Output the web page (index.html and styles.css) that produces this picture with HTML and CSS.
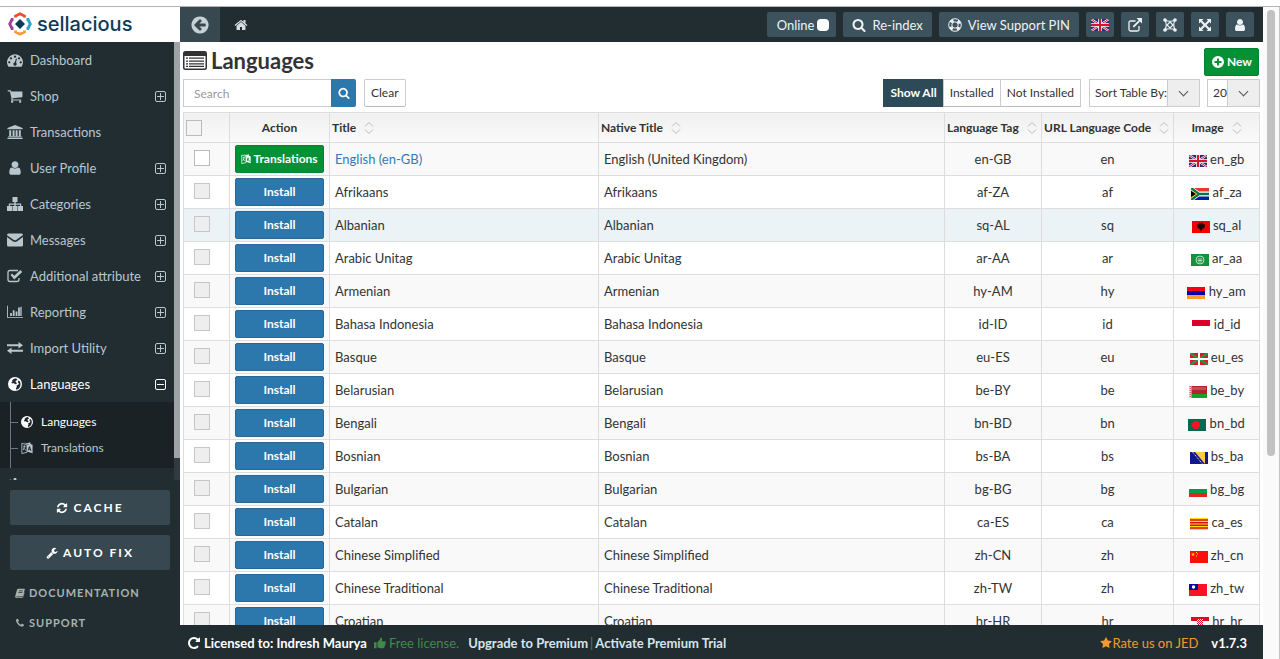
FILE: index.html
```html
<!DOCTYPE html>
<html lang="en">
<head>
<meta charset="utf-8">
<title>Languages - Sellacious</title>
<link rel="stylesheet" href="styles.css">
</head>
<body>
<svg class="defs" aria-hidden="true">
  <symbol id="i-back" viewBox="0 0 1792 1792"><path d="M1408 960v-128q0-26-19-45t-45-19h-502l189-189q19-19 19-45t-19-45l-91-91q-18-18-45-18t-45 18l-362 362-91 91q-18 18-18 45t18 45l91 91 362 362q18 18 45 18t45-18l91-91q18-18 18-45t-18-45l-189-189h502q26 0 45-19t19-45zm256-64q0 209-103 385.5t-279.5 279.5-385.5 103-385.5-103-279.5-279.5-103-385.5 103-385.5 279.5-279.5 385.5-103 385.5 103 279.5 279.5 103 385.5z"/></symbol>
  <symbol id="i-home" viewBox="0 0 1792 1792"><path d="M1472 992v480q0 26-19 45t-45 19h-384v-384h-256v384h-384q-26 0-45-19t-19-45v-480q0-1 .5-3t.5-3l575-474 575 474q1 2 1 6zm223-69l-62 74q-8 9-21 11h-3q-13 0-21-7l-692-577-692 577q-12 8-24 7-13-2-21-11l-62-74q-8-10-7-23.500t11-21.500l719-599q32-26 76-26t76 26l244 204v-195q0-14 9-23t23-9h192q14 0 23 9t9 23v408l219 182q10 8 11 21.500t-7 23.500z"/></symbol>
  <symbol id="i-search" viewBox="0 0 1792 1792"><path d="M1216 832q0-185-131.500-316.500t-316.500-131.500-316.500 131.500-131.500 316.500 131.500 316.500 316.500 131.500 316.500-131.500 131.500-316.500zm512 832q0 52-38 90t-90 38q-54 0-90-38l-343-342q-179 124-399 124-143 0-273.500-55.500t-225-150-150-225-55.500-273.500 55.500-273.500 150-225 225-150 273.500-55.500 273.500 55.500 225 150 150 225 55.500 273.500q0 220-124 399l343 343q37 37 37 90z"/></symbol>
  <symbol id="i-user" viewBox="0 0 1792 1792"><path d="M1536 1399q0 109-62.500 187t-150.500 78h-854q-88 0-150.500-78t-62.500-187q0-85 8.500-160.500t31.500-152 58.500-131 94-89 134.500-34.500q131 128 313 128t313-128q76 0 134.500 34.500t94 89 58.500 131 31.500 152 8.500 160.500zm-256-887q0 159-112.500 271.500t-271.500 112.500-271.500-112.500-112.500-271.500 112.500-271.500 271.500-112.500 271.500 112.500 112.500 271.500z"/></symbol>
  <symbol id="i-dash" viewBox="0 0 1792 1792"><path d="M384 1152q0-53-37.500-90.500t-90.500-37.500-90.500 37.500-37.500 90.500 37.500 90.500 90.500 37.500 90.500-37.500 37.500-90.500zm192-448q0-53-37.500-90.500t-90.500-37.500-90.500 37.500-37.500 90.500 37.500 90.500 90.500 37.500 90.500-37.500 37.500-90.500zm428 481l101-382q6-26-7.500-48.500t-38.500-29.500-48 6.500-30 39.500l-101 382q-60 5-107 43.500t-63 98.500q-20 77 20 146t117 89 146-20 89-117q16-60-6-117t-72-91zm660-33q0-53-37.500-90.500t-90.500-37.500-90.500 37.500-37.500 90.500 37.500 90.500 90.500 37.500 90.500-37.500 37.500-90.500zm-640-640q0-53-37.500-90.500t-90.500-37.500-90.500 37.500-37.500 90.500 37.500 90.500 90.500 37.500 90.500-37.500 37.500-90.500zm448 192q0-53-37.500-90.500t-90.500-37.500-90.500 37.500-37.500 90.500 37.500 90.500 90.500 37.500 90.500-37.500 37.500-90.500zm320 448q0 261-141 483-19 29-54 29h-1402q-35 0-54-29-141-221-141-483 0-182 71-348t191-286 286-191 348-71 348 71 286 191 191 286 71 348z"/></symbol>
  <symbol id="i-cart" viewBox="0 0 1792 1792"><path d="M704 1536q0 52-38 90t-90 38-90-38-38-90 38-90 90-38 90 38 38 90zm896 0q0 52-38 90t-90 38-90-38-38-90 38-90 90-38 90 38 38 90zm128-1088v512q0 24-16.500 42.500t-40.500 21.500l-1044 122q13 60 13 70 0 16-24 64h920q26 0 45 19t19 45-19 45-45 19h-1024q-26 0-45-19t-19-45q0-11 8-31.500t16-36 21.500-40 15.500-29.500l-177-823h-204q-26 0-45-19t-19-45 19-45 45-19h256q16 0 28.500 6.500t19.500 15.500 13 24.500 8 26 5.500 29.500 4.500 26h1201q26 0 45 19t19 45z"/></symbol>
  <symbol id="i-bank" viewBox="0 0 18 16"><path d="M9 0l8.500 3.500V5H.5V3.500zM2.500 6h2.200v6.500H2.500zM6.300 6h2.200v6.500H6.300zM9.700 6h2.200v6.500H9.700zM13.300 6h2.200v6.500h-2.200zM1.500 12.800h15V14h-15zM.5 14.500h17V16H.5z"/></symbol>
  <symbol id="i-map" viewBox="0 0 16 14"><path d="M5.500 0h5v5H8.700v1.500H14.200V9H16v5h-5V9h2V7.700H8.700V9h1.800v5h-5V9h1.800V7.700H3V9h2v5H0V9h1.800V6.500h5.500V5H5.500z"/></symbol>
  <symbol id="i-mail" viewBox="0 0 16 13"><path d="M0 1.500Q0 0 1.500 0h13Q16 0 16 1.500L9.500 6.300Q8 7.400 6.500 6.300L0 1.800zM0 3.500l5.800 4.200q2.200 1.500 4.400 0L16 3.500v8q0 1.500-1.500 1.500h-13Q0 13 0 11.500z"/></symbol>
  <symbol id="i-check" viewBox="0 0 16 14"><path d="M11 1.500H3Q1 1.500 1 3.500v7q0 2 2 2h7q2 0 2-2V9" fill="none" stroke="currentColor" stroke-width="1.300"/><path d="M3.500 6l1.500-1.500 2.300 2.200L13.300 1l1.900 1.900-7.900 7.700z"/></symbol>
  <symbol id="i-chart" viewBox="0 0 18 14"><path d="M0 0h1v12.500h17v1H0zM3.500 8h2v3.500h-2zM6.500 5h2v6.500h-2zM9.700 6.500h2v5h-2zM12.500 2h2v9.500h-2zM15 1h1.500v10.500H15z"/></symbol>
  <symbol id="i-exchange" viewBox="0 0 16 12"><path d="M0 2.200h11.500V0L16 3.200l-4.500 3.300V4.300H0zM16 7.700H4.500V5.500L0 8.800 4.500 12V9.800H16z"/></symbol>
  <symbol id="i-globe" viewBox="0 0 14 14"><path fill-rule="evenodd" d="M7 0a7 7 0 1 1 0 14A7 7 0 0 1 7 0zM8 1.200L5.500 2 4 3.500l.5 1L3.200 5.800l1.300.6L6 6l.5 1 1.500.3L9 6 7.500 5l.3-1.200L9.500 3zM10.500 3.500L9.700 5l1.300 1.500L10 8l-1.500.3.3 1.700-1 1.500.7 1.200q2.500-.6 3.500-2.700 1.300-2.800 0-5.500z"/></symbol>
  <symbol id="i-lang" viewBox="0 0 14 14"><path d="M1 1.500l6 1.800V12l-6 1.500z" fill="none" stroke="currentColor"/><path d="M2.500 5l3 .5M4 4v2l-1.500 3.500M3 7l3 3" fill="none" stroke="currentColor"/><path fill-rule="evenodd" d="M3.500.5L7 1.500 11 .3v2l2.500.8V13L7 11V3.500l3-1-3 .2zM9.300 5L8 9.600l1 .3.3-1.100 1.600.4.400 1.200 1 .3-1.800-5.400zm.9 1.300l.5 1.700-1-.3z"/></symbol>
  <symbol id="i-cog" viewBox="0 0 14 14"><path d="M6 0h2l.4 2 1.400.6L11.500 1.500 13 3l-1.200 1.700.5 1.300 2 .3v2l-2 .4L11.700 10l1 1.500-1.500 1.500L9.500 12 8 12.500 7.800 14h-2l-.4-1.800L4 11.700 2.500 13 1 11.500 2.200 10 1.700 8.500 0 8V6l1.800-.4L2.300 4.300 1.200 2.700 2.700 1.200 4.200 2.300 5.700 1.800z"/></symbol>
  <symbol id="i-refresh" viewBox="0 0 1792 1792"><path d="M1639 1056q0 5-1 7-64 268-268 434.500t-478 166.500q-146 0-282.500-55t-243.500-157l-129 129q-19 19-45 19t-45-19-19-45v-448q0-26 19-45t45-19h448q26 0 45 19t19 45-19 45l-137 137q71 66 161 102t187 36q134 0 250-65t186-179q11-17 53-117 8-23 30-23h192q13 0 22.500 9.500t9.500 22.500zm25-800v448q0 26-19 45t-45 19h-448q-26 0-45-19t-19-45 19-45l138-138q-148-137-349-137-134 0-250 65t-186 179q-11 17-53 117-8 23-30 23h-199q-13 0-22.500-9.500t-9.500-22.500v-7q65-268 270-434.500t480-166.500q146 0 284 55.500t245 156.500l130-129q19-19 45-19t45 19 19 45z"/></symbol>
  <symbol id="i-repeat" viewBox="0 0 1792 1792"><path d="M1664 256v448q0 26-19 45t-45 19h-448q-42 0-59-40-17-39 14-69l138-138q-148-137-349-137-104 0-198.500 40.500t-163.500 109.500-109.500 163.500-40.500 198.500 40.500 198.500 109.500 163.500 163.500 109.500 198.500 40.500q119 0 225-52t179-147q7-10 23-12 15 0 25 9l137 138q9 8 9.500 20.500t-7.500 22.500q-109 132-264 204.500t-327 72.500q-156 0-298-61t-245-164-164-245-61-298 61-298 164-245 245-164 298-61q147 0 284.500 55.500t244.500 156.500l130-129q29-31 70-14 39 17 39 59z"/></symbol>
  <symbol id="i-wrench" viewBox="0 0 1792 1792"><path d="M448 1472q0-26-19-45t-45-19-45 19-19 45 19 45 45 19 45-19 19-45zm644-420l-682 682q-37 37-90 37-52 0-91-37l-106-108q-38-36-38-90 0-53 38-91l681-681q39 98 114.500 173.500t173.500 114.500zm634-435q0 39-23 106-47 134-164.500 217.500t-258.500 83.500q-185 0-316.500-131.500t-131.500-316.500 131.500-316.500 316.500-131.500q58 0 121.500 16.500t107.500 46.500q16 11 16 28t-16 28l-293 169v224l193 107q5-3 79-48.500t135.500-81 70.500-35.500q15 0 23.500 10t8.500 25z"/></symbol>
  <symbol id="i-phone" viewBox="0 0 1792 1792"><path d="M1600 1240q0 27-10 70.500t-21 68.500q-21 50-122 106-94 51-186 51-27 0-52.500-3.500t-57.500-12.500-47.500-14.500-55.500-20.500-49-18q-98-35-175-83-128-79-264.500-215.500t-215.500-264.500q-48-77-83-175-3-9-18-49t-20.500-55.500-14.500-47.500-12.500-57.500-3.500-52.500q0-92 51-186 56-101 106-122 25-11 68.500-21t70.500-10q14 0 21 3 18 6 53 76 11 19 30 54t35 63.500 31 53.500q3 4 17.500 25t21.500 35.500 7 28.500q0 20-28.500 50t-62 55-62 53-28.500 46q0 9 5 22.500t8.500 20.500 14 24 11.500 19q76 137 174 235t235 174q2 1 19 11.500t24 14 20.500 8.500 22.500 5q18 0 46-28.500t53-62 55-62 50-28.500q14 0 28.500 7t35.500 21.500 25 17.500q25 15 53.500 31t63.500 35 54 30q70 35 76 53 3 7 3 21z"/></symbol>
  <symbol id="i-book" viewBox="0 0 14 14"><path fill-rule="evenodd" d="M4.500 1H13q1 0 .7 1L11.300 11q-.3 1-1.300 1H2.200q-.7 0-.5.5.2.500 1 .500h8.300L12.800 6l.6.600L11.500 13q-.3 1-1.300 1H2Q0 14 .2 12L2.800 2.500Q3.200 1 4.500 1zM5.500 3.500l-.3 1h5.500l.3-1zM5 5.500l-.3 1h5.500l.3-1z"/></symbol>
  <symbol id="i-thumb" viewBox="0 0 14 14"><path d="M0 6h3v7H0zM4 6.200L7 3l.5-2.500Q9.500.3 9.500 2.500L9 5h3.500q1.300 0 1.300 1.200 0 1-.6 1.300.5 1.300-.4 2 .2 1.300-.6 1.800.1 1.700-1.700 1.700H7.500L4 12z"/></symbol>
  <symbol id="i-star" viewBox="0 0 1792 1792"><path d="M1728 647q0 22-26 48l-363 354 86 500q1 7 1 20 0 21-10.500 35.500t-30.500 14.500q-19 0-40-12l-449-236-449 236q-22 12-40 12-21 0-31.500-14.500t-10.500-35.500q0-6 2-20l86-500-364-354q-25-27-25-48 0-37 56-46l502-73 225-455q19-41 49-41t49 41l225 455 502 73q56 9 56 46z"/></symbol>
  <symbol id="i-ring" viewBox="0 0 14 14"><g fill="none" stroke="currentColor"><circle cx="7" cy="7" r="6.300"/><circle cx="7" cy="7" r="3.200"/><circle cx="7" cy="7" r="4.800" stroke-width="3.200" stroke-dasharray="3.200 4.340" stroke-dashoffset="-2.170"/></g></symbol>
  <symbol id="i-ext" viewBox="0 0 14 14"><path d="M7.500 3H2.500Q1 3 1 4.500v7Q1 13 2.500 13h7q1.500 0 1.500-1.500V8" fill="none" stroke="currentColor" stroke-width="1.300"/><path d="M8.500 0H14v5.500l-2-2-6 6L4.700 8.200l6-6z"/></symbol>
  <symbol id="i-joomla" viewBox="0 0 14 14"><g fill="none" stroke="currentColor" stroke-width="1.200"><path d="M2 2q5 2.500 10 0-2.500 5 0 10-5-2.500-10 0 2.500-5 0-10z"/><path d="M7 4l3 3-3 3-3-3z"/></g><circle cx="2" cy="2" r="1.800"/><circle cx="12" cy="2" r="1.800"/><circle cx="2" cy="12" r="1.800"/><circle cx="12" cy="12" r="1.800"/></symbol>
  <symbol id="i-expand" viewBox="0 0 14 14"><path d="M1 1h4.500L4 2.500l3 3 3-3L8.500 1H13v4.500L11.500 4l-3 3 3 3L13 8.500V13H8.500l1.500-1.500-3-3-3 3L5.500 13H1V8.500L2.500 10l3-3-3-3L1 5.500z"/></symbol>
  <symbol id="i-plusc" viewBox="0 0 14 14"><path fill-rule="evenodd" d="M7 1a6 6 0 1 1 0 12A6 6 0 0 1 7 1zM6 3.500V6H3.500v2H6v2.500h2V8h2.500V6H8V3.500z"/></symbol>
  <symbol id="i-list" viewBox="0 0 24 20"><path fill-rule="evenodd" d="M2.500 0h19Q24 0 24 2.500v14Q24 19 21.500 19h-19Q0 19 0 16.500v-14Q0 0 2.500 0zM1.500 5v11.500q0 1 1 1h19q1 0 1-1V5z"/><path d="M3 6.500h2v1.300H3zM6 6.500h15v1.300H6zM3 9.500h2v1.300H3zM6 9.500h15v1.300H6zM3 12.200h2v1.300H3zM6 12.200h15v1.300H6zM3 14.800h2v1.300H3zM6 14.800h15v1.300H6z"/></symbol>
  <symbol id="i-plus" viewBox="0 0 11 11"><path d="M2 .5h7q1.500 0 1.500 1.500v7q0 1.500-1.500 1.500H2Q.5 10.500.5 9V2Q.5.500 2 .5zM5.500 2v7M2 5.500h7" fill="none" stroke="currentColor"/></symbol>
  <symbol id="i-minus" viewBox="0 0 11 11"><path d="M2 .5h7q1.500 0 1.500 1.500v7q0 1.500-1.500 1.500H2Q.5 10.500.5 9V2Q.5.500 2 .5zM2 5.500h7" fill="none" stroke="currentColor"/></symbol>
  <symbol id="i-sort" viewBox="0 0 10 14"><path d="M1 5.500l4-4 4 4M1 8.500l4 4 4-4" fill="none" stroke="currentColor"/></symbol>
  <symbol id="f-gb" viewBox="0 0 18 12"><path fill="#1d2f7c" d="M0 0h18v12H0z"/><path d="M0 0l18 12M18 0L0 12" stroke="#fff" stroke-width="2.200"/><path d="M0 0l18 12M18 0L0 12" stroke="#d8122d"/><path d="M9 0v12M0 6h18" stroke="#fff" stroke-width="3.600"/><path d="M9 0v12M0 6h18" stroke="#d8122d" stroke-width="2"/></symbol>
  <symbol id="f-za" viewBox="0 0 18 12"><path fill="#fff" d="M0 0h18v12H0z"/><path fill="#e03c31" d="M3 0h15v3.500H8z"/><path fill="#00209f" d="M3 12h15V8.500H8z"/><path d="M0 0l8 6-8 6M8 6h10" fill="none" stroke="#007749" stroke-width="2.400"/><path fill="#ffb81c" d="M0 1.500L6.200 6 0 10.500z"/><path d="M0 2.700L4.800 6 0 9.300z" fill="#000"/></symbol>
  <symbol id="f-al" viewBox="0 0 18 12"><path fill="#f00000" d="M0 0h18v12H0z"/><path fill="#200" d="M7.500 1.500L9 2.500l1.500-1 .5 2 2-.5-.6 4-1.600.5-.8 1-1 2-1-2-.8-1-1.600-.5L5 3l2 .5z"/></symbol>
  <symbol id="f-aa" viewBox="0 0 18 12"><path fill="#16913f" d="M0 0h18v12H0z"/><circle cx="9" cy="6" r="4" fill="none" stroke="#b6dcbf"/><path d="M7 5h4M6.500 6.500h5M7.500 8h3" stroke="#b6dcbf"/></symbol>
  <symbol id="f-am" viewBox="0 0 18 12"><path fill="#f00014" d="M0 0h18v4H0z"/><path fill="#0000a8" d="M0 4h18v4H0z"/><path fill="#ff9a30" d="M0 8h18v4H0z"/></symbol>
  <symbol id="f-id" viewBox="0 0 18 12"><path fill="#fff" d="M0 0h18v12H0z"/><path fill="#d9002b" d="M0 0h18v6H0z"/></symbol>
  <symbol id="f-es" viewBox="0 0 18 12"><path fill="#e0162b" d="M0 0h18v12H0z"/><path d="M0 0l18 12M18 0L0 12" stroke="#12a04a" stroke-width="2"/><path d="M9 0v12M0 6h18" stroke="#fff" stroke-width="2"/></symbol>
  <symbol id="f-by" viewBox="0 0 18 12"><path fill="#b8202a" d="M0 0h18v8H0z"/><path fill="#18a02e" d="M0 8h18v4H0z"/><path fill="#f2d9d9" d="M0 0h2.500v12H0z"/><path d="M1.200 0v12" stroke="#c8313e" stroke-dasharray="1 1"/><path fill="#fff" opacity=".2" d="M3 1h14v3H3z"/></symbol>
  <symbol id="f-bd" viewBox="0 0 18 12"><path fill="#006a4e" d="M0 0h18v12H0z"/><circle cx="8" cy="6" r="4" fill="#ff0f20"/></symbol>
  <symbol id="f-ba" viewBox="0 0 18 12"><path fill="#10188c" d="M0 0h18v12H0z"/><path fill="#fecb3c" d="M5 0h10v12z"/><path d="M2.500 0l10 12" stroke="#fff" stroke-dasharray="1 1"/></symbol>
  <symbol id="f-bg" viewBox="0 0 18 12"><path fill="#fff" d="M0 0h18v4H0z"/><path fill="#009a50" d="M0 4h18v4H0z"/><path fill="#e0261c" d="M0 8h18v4H0z"/></symbol>
  <symbol id="f-ca" viewBox="0 0 18 12"><path fill="#fcdd09" d="M0 0h18v12H0z"/><path d="M0 2h18M0 4.700h18M0 7.300h18M0 10h18" stroke="#da121a" stroke-width="1.400"/></symbol>
  <symbol id="f-cn" viewBox="0 0 18 12"><path fill="#fa0f0c" d="M0 0h18v12H0z"/><path fill="#ffde00" d="M3 1.500l.5 1.300h1.400l-1.100.9.4 1.400L3 4.300l-1.200.8.400-1.400-1.100-.9h1.400zM6 1h1v1H6zM7 2.500h1v1H7zM6 4.500h1v1H6z"/></symbol>
  <symbol id="f-tw" viewBox="0 0 18 12"><path fill="#fb1226" d="M0 0h18v12H0z"/><path fill="#000e9c" d="M0 0h9v6H0z"/><circle cx="4.500" cy="3" r="1.700" fill="#fff"/></symbol>
  <symbol id="f-hr" viewBox="0 0 18 12"><path fill="#fff" d="M0 0h18v12H0z"/><path fill="#d80f1c" d="M0 0h18v4H0z"/><path fill="#171796" d="M0 8h18v4H0z"/><path fill="#fff" d="M6 2h6v7H6z"/><path d="M6 2.500h6M6 4.500h6M6 6.500h6" stroke="#e01020" stroke-dasharray="1 1"/><path d="M7 3.500h5M7 5.500h5M7 7.500h5" stroke="#e01020" stroke-dasharray="1 1"/></symbol>
</svg>

<div class="window-edge"></div>
<div class="app">
  <aside class="sidebar">
    <a class="brand" href="#">
      <svg class="brand-mark" viewBox="0 0 24 24" aria-hidden="true"><g fill="none" stroke-width="2.800"><path d="M7.500 5.500V4L12 1.800 16.500 4v1.500" stroke="#f04a2c"/><path d="M18.500 7.500H20L22.300 12 20 16.500h-1.500" stroke="#2aa5c9"/><path d="M7.500 18.500V20l4.500 2.200 4.500-2.200v-1.500" stroke="#f79a3a"/><path d="M5.500 7.500H4L1.700 12 4 16.500h1.500" stroke="#9a3fa0"/></g><path d="M12 7l5 5-5 5-5-5z" fill="#0d3b57"/></svg>
      <span>sellacious</span>
    </a>
    <div class="nav-scroll">
      <nav class="nav">
        <a class="item" href="#"><svg class="ico"><use href="#i-dash"/></svg><span>Dashboard</span></a>
        <a class="item" href="#"><svg class="ico"><use href="#i-cart"/></svg><span>Shop</span><svg class="fold"><use href="#i-plus"/></svg></a>
        <a class="item" href="#"><svg class="ico"><use href="#i-bank"/></svg><span>Transactions</span></a>
        <a class="item" href="#"><svg class="ico"><use href="#i-user"/></svg><span>User Profile</span><svg class="fold"><use href="#i-plus"/></svg></a>
        <a class="item" href="#"><svg class="ico"><use href="#i-map"/></svg><span>Categories</span><svg class="fold"><use href="#i-plus"/></svg></a>
        <a class="item" href="#"><svg class="ico"><use href="#i-mail"/></svg><span>Messages</span><svg class="fold"><use href="#i-plus"/></svg></a>
        <a class="item" href="#"><svg class="ico"><use href="#i-check"/></svg><span>Additional attribute</span><svg class="fold"><use href="#i-plus"/></svg></a>
        <a class="item" href="#"><svg class="ico"><use href="#i-chart"/></svg><span>Reporting</span><svg class="fold"><use href="#i-plus"/></svg></a>
        <a class="item" href="#"><svg class="ico"><use href="#i-exchange"/></svg><span>Import Utility</span><svg class="fold"><use href="#i-plus"/></svg></a>
        <a class="item active" href="#"><svg class="ico globe"><use href="#i-globe"/></svg><span>Languages</span><svg class="fold"><use href="#i-minus"/></svg></a>
        <div class="subnav">
          <a class="subitem active" href="#"><svg class="ico-s"><use href="#i-globe"/></svg><span>Languages</span></a>
          <a class="subitem" href="#"><svg class="ico-s"><use href="#i-lang"/></svg><span>Translations</span></a>
        </div>
        <a class="item" href="#" aria-label="Settings"><svg class="ico"><use href="#i-cog"/></svg></a>
      </nav>
      <div class="nav-bar"><div class="nav-thumb"></div></div>
    </div>
    <div class="side-foot">
      <button class="side-btn" type="button"><svg class="ico-s"><use href="#i-refresh"/></svg>CACHE</button>
      <button class="side-btn" type="button"><svg class="ico-s"><use href="#i-wrench"/></svg>AUTO FIX</button>
      <a class="side-link" href="#"><svg class="ico-xs"><use href="#i-book"/></svg>DOCUMENTATION</a>
      <a class="side-link" href="#"><svg class="ico-xs"><use href="#i-phone"/></svg>SUPPORT</a>
    </div>
  </aside>

  <div class="main">
    <header class="topbar">
      <button class="back" type="button" aria-label="Back"><svg><use href="#i-back"/></svg></button>
      <a class="home" href="#" aria-label="Home"><svg class="ico-m"><use href="#i-home"/></svg></a>
      <div class="tools">
        <label class="tool">Online<input class="switch" type="checkbox"></label>
        <button class="tool wide" type="button"><svg class="ico-m"><use href="#i-search"/></svg>Re-index</button>
        <button class="tool wide" type="button"><svg class="ico-m"><use href="#i-ring"/></svg>View Support PIN</button>
        <button class="tool square" type="button" aria-label="Language"><svg class="flag"><use href="#f-gb"/></svg></button>
        <button class="tool square" type="button" aria-label="Open site"><svg class="ico-m"><use href="#i-ext"/></svg></button>
        <button class="tool square" type="button" aria-label="Joomla"><svg class="ico-m"><use href="#i-joomla"/></svg></button>
        <button class="tool square" type="button" aria-label="Full screen"><svg class="ico-m"><use href="#i-expand"/></svg></button>
        <button class="tool square" type="button" aria-label="User"><svg class="ico-m"><use href="#i-user"/></svg></button>
      </div>
    </header>

    <main class="content">
      <div class="title-row">
        <h1><svg class="title-ico"><use href="#i-list"/></svg>Languages</h1>
        <button class="new" type="button"><svg class="ico-m"><use href="#i-plusc"/></svg>New</button>
      </div>
      <div class="filters">
        <div class="search">
          <input type="text" placeholder="Search" aria-label="Search">
          <button type="button" aria-label="Search"><svg class="ico-s"><use href="#i-search"/></svg></button>
        </div>
        <button class="clear" type="button">Clear</button>
        <div class="segments">
          <button class="on" type="button">Show All</button><button type="button">Installed</button><button type="button">Not Installed</button>
        </div>
        <div class="pick sort"><select aria-label="Sort Table By"><option>Sort Table By:</option></select><span class="arrow"></span></div>
        <div class="pick count"><select aria-label="Rows per page"><option>20</option></select><span class="arrow"></span></div>
      </div>

      <table>
        <colgroup><col class="c-check"><col class="c-act"><col class="c-title"><col class="c-native"><col class="c-tag"><col class="c-url"><col class="c-img"></colgroup>
        <thead>
          <tr>
            <th class="l"><input type="checkbox" aria-label="Select all"></th>
            <th>Action</th>
            <th class="l">Title<svg class="sorter"><use href="#i-sort"/></svg></th>
            <th class="l">Native Title<svg class="sorter"><use href="#i-sort"/></svg></th>
            <th class="l">Language Tag<svg class="sorter"><use href="#i-sort"/></svg></th>
            <th class="l">URL Language Code<svg class="sorter"><use href="#i-sort"/></svg></th>
            <th>Image<svg class="sorter"><use href="#i-sort"/></svg></th>
          </tr>
        </thead>
        <tbody>
          <tr><td><input type="checkbox" aria-label="Select English"></td><td><button class="act green" type="button"><svg class="ico-xs"><use href="#i-lang"/></svg>Translations</button></td><td><a href="#">English (en-GB)</a></td><td>English (United Kingdom)</td><td>en-GB</td><td>en</td><td><svg class="flag"><use href="#f-gb"/></svg> en_gb</td></tr>
          <tr><td><input type="checkbox" disabled aria-label="Select Afrikaans"></td><td><button class="act" type="button">Install</button></td><td>Afrikaans</td><td>Afrikaans</td><td>af-ZA</td><td>af</td><td><svg class="flag"><use href="#f-za"/></svg> af_za</td></tr>
          <tr class="hover"><td><input type="checkbox" disabled aria-label="Select Albanian"></td><td><button class="act" type="button">Install</button></td><td>Albanian</td><td>Albanian</td><td>sq-AL</td><td>sq</td><td><svg class="flag"><use href="#f-al"/></svg> sq_al</td></tr>
          <tr><td><input type="checkbox" disabled aria-label="Select Arabic Unitag"></td><td><button class="act" type="button">Install</button></td><td>Arabic Unitag</td><td>Arabic Unitag</td><td>ar-AA</td><td>ar</td><td><svg class="flag"><use href="#f-aa"/></svg> ar_aa</td></tr>
          <tr><td><input type="checkbox" disabled aria-label="Select Armenian"></td><td><button class="act" type="button">Install</button></td><td>Armenian</td><td>Armenian</td><td>hy-AM</td><td>hy</td><td><svg class="flag"><use href="#f-am"/></svg> hy_am</td></tr>
          <tr><td><input type="checkbox" disabled aria-label="Select Bahasa Indonesia"></td><td><button class="act" type="button">Install</button></td><td>Bahasa Indonesia</td><td>Bahasa Indonesia</td><td>id-ID</td><td>id</td><td><svg class="flag"><use href="#f-id"/></svg> id_id</td></tr>
          <tr><td><input type="checkbox" disabled aria-label="Select Basque"></td><td><button class="act" type="button">Install</button></td><td>Basque</td><td>Basque</td><td>eu-ES</td><td>eu</td><td><svg class="flag"><use href="#f-es"/></svg> eu_es</td></tr>
          <tr><td><input type="checkbox" disabled aria-label="Select Belarusian"></td><td><button class="act" type="button">Install</button></td><td>Belarusian</td><td>Belarusian</td><td>be-BY</td><td>be</td><td><svg class="flag"><use href="#f-by"/></svg> be_by</td></tr>
          <tr><td><input type="checkbox" disabled aria-label="Select Bengali"></td><td><button class="act" type="button">Install</button></td><td>Bengali</td><td>Bengali</td><td>bn-BD</td><td>bn</td><td><svg class="flag"><use href="#f-bd"/></svg> bn_bd</td></tr>
          <tr><td><input type="checkbox" disabled aria-label="Select Bosnian"></td><td><button class="act" type="button">Install</button></td><td>Bosnian</td><td>Bosnian</td><td>bs-BA</td><td>bs</td><td><svg class="flag"><use href="#f-ba"/></svg> bs_ba</td></tr>
          <tr><td><input type="checkbox" disabled aria-label="Select Bulgarian"></td><td><button class="act" type="button">Install</button></td><td>Bulgarian</td><td>Bulgarian</td><td>bg-BG</td><td>bg</td><td><svg class="flag"><use href="#f-bg"/></svg> bg_bg</td></tr>
          <tr><td><input type="checkbox" disabled aria-label="Select Catalan"></td><td><button class="act" type="button">Install</button></td><td>Catalan</td><td>Catalan</td><td>ca-ES</td><td>ca</td><td><svg class="flag"><use href="#f-ca"/></svg> ca_es</td></tr>
          <tr><td><input type="checkbox" disabled aria-label="Select Chinese Simplified"></td><td><button class="act" type="button">Install</button></td><td>Chinese Simplified</td><td>Chinese Simplified</td><td>zh-CN</td><td>zh</td><td><svg class="flag"><use href="#f-cn"/></svg> zh_cn</td></tr>
          <tr><td><input type="checkbox" disabled aria-label="Select Chinese Traditional"></td><td><button class="act" type="button">Install</button></td><td>Chinese Traditional</td><td>Chinese Traditional</td><td>zh-TW</td><td>zh</td><td><svg class="flag"><use href="#f-tw"/></svg> zh_tw</td></tr>
          <tr><td><input type="checkbox" disabled aria-label="Select Croatian"></td><td><button class="act" type="button">Install</button></td><td>Croatian</td><td>Croatian</td><td>hr-HR</td><td>hr</td><td><svg class="flag"><use href="#f-hr"/></svg> hr_hr</td></tr>
        </tbody>
      </table>
    </main>

    <footer class="footer">
      <svg class="ico-m"><use href="#i-repeat"/></svg>
      <span class="licensed">Licensed to: Indresh Maurya</span>
      <span class="free"><svg class="ico-s"><use href="#i-thumb"/></svg>Free license.</span>
      <a href="#">Upgrade to Premium</a><span class="bar">|</span><a href="#">Activate Premium Trial</a>
      <a class="rate" href="#"><svg class="ico-s"><use href="#i-star"/></svg>Rate us on JED</a>
      <span class="version">v1.7.3</span>
    </footer>
  </div>

  <div class="scrollbar"><div class="thumb"></div></div>
</div>
</body>
</html>
```
FILE: styles.css
```css
* { box-sizing: border-box; }
body {
  margin: 0;
  height: 100vh;
  display: flex;
  flex-direction: column;
  overflow: hidden;
  background: #fff;
  color: #333;
  font: 13px/18px Lato, "Liberation Sans", sans-serif;
}
button, input, select { font: inherit; color: inherit; margin: 0; }
a { color: inherit; text-decoration: none; }
svg { fill: currentColor; flex: none; }
.defs { position: absolute; width: 0; height: 0; }
.ico { width: 16px; height: 16px; }
.ico-m { width: 14px; height: 14px; }
.ico-s { width: 12px; height: 12px; }
.ico-xs { width: 10px; height: 10px; }
.flag { width: 18px; height: 12px; vertical-align: -3px; }

.window-edge { flex: none; height: 7px; border-bottom: 1px solid #b4b4b4; }
.app { flex: 1; min-height: 0; display: flex; }

/* Sidebar */
.sidebar { flex: none; width: 180px; display: flex; flex-direction: column; background: #222d32; color: #b8c7ce; }
.brand { flex: none; height: 35px; display: flex; align-items: center; gap: 5px; padding: 0 0 2px 8px; background: #fff; color: #0d3b57; font: 500 20px/24px Inter, sans-serif; }
.brand-mark { width: 24px; height: 24px; }
.nav-scroll { flex: 1; min-height: 0; display: flex; overflow: hidden; }
.nav { flex: 1; font-size: 13px; }
.item { height: 36px; display: flex; align-items: center; gap: 7px; padding: 0 8px 0 7px; white-space: nowrap; }
.item.active, .subitem.active { color: #fff; }
.globe { padding: 1px; }
.fold { width: 11px; height: 11px; margin-left: auto; }
.subnav { padding: 7px 0 7px 10px; background: #1a2226; font-size: 12px; position: relative; }
.subnav::before { content: ""; position: absolute; left: 10px; top: 0; bottom: 0; border-left: 1px solid #6d767a; }
.subitem { height: 26px; display: flex; align-items: center; gap: 8px; }
.subitem::before { content: ""; width: 8px; border-top: 1px solid #6d767a; margin-right: -5px; }
.nav-bar { width: 6px; background: #303b40; }
.nav-thumb { height: 95%; background: #9fa3a5; }
.side-foot { flex: none; height: 179px; padding: 10px 10px 0; }
.side-btn { width: 100%; height: 35px; margin-bottom: 10px; display: flex; align-items: center; justify-content: center; gap: 5px; border: 0; border-radius: 2px; background: #374850; color: #fff; font-size: 12px; font-weight: 700; letter-spacing: 2px; }
.side-link { height: 30px; display: flex; align-items: center; gap: 4px; padding: 0 0 4px 5px; font-size: 11px; font-weight: 700; letter-spacing: 1px; color: #a9b3ae; }

/* Top bar */
.main { flex: 1; min-width: 0; display: flex; flex-direction: column; }
.topbar { flex: none; height: 35px; display: flex; align-items: center; background: #222d32; color: #d5dde0; }
.back { width: 40px; height: 35px; padding: 0; display: grid; place-items: center; border: 0; background: #374850; color: #c8d2d6; }
.back svg { width: 20px; height: 20px; }
.home { padding-left: 14px; display: flex; }
.tools { margin-left: auto; display: flex; gap: 7px; padding-right: 9px; }
.tool { height: 25px; display: flex; align-items: center; gap: 3px; padding: 0 7px 0 10px; border: 0; border-radius: 2px; background: #3c535e; color: #eef2f4; font-size: 13px; }
.tool.wide { padding: 0 9px; gap: 6px; }
.tool.square { width: 28px; padding: 0; justify-content: center; }
.switch { appearance: none; width: 12px; height: 12px; border-radius: 4px; background: #fff; }

/* Content */
.content { flex: 1; min-height: 0; overflow: hidden; padding: 0 3px; }
.title-row { height: 37px; padding-right: 1px; display: flex; align-items: center; justify-content: space-between; }
h1 { margin: 0; display: flex; align-items: center; gap: 4px; font-size: 22px; line-height: 30px; }
.title-ico { width: 24px; height: 20px; }
.new { height: 28px; margin-top: 3px; padding: 0 6px; display: flex; align-items: center; gap: 2px; border: 1px solid #048231; border-radius: 2px; background: #049136; color: #fff; font-size: 12px; font-weight: 700; }
.filters { height: 33px; display: flex; align-items: flex-start; font-size: 12px; }
.search { display: flex; }
.search input { width: 148px; height: 28px; padding: 0 10px; border: 1px solid #ccc; border-right: 0; }
.search input::placeholder { color: #999; }
.search button { width: 25px; height: 28px; padding: 0; display: grid; place-items: center; border: 0; background: #2c77ac; color: #fff; border-radius: 0 2px 2px 0; }
.clear, .segments button { height: 28px; border: 1px solid #ccc; background: #fff; border-radius: 2px; padding: 0 6px; border-bottom-color: #bbb; }
.clear { margin-left: 8px; }
.segments { margin-left: auto; display: flex; }
.segments button { border-radius: 0; margin-left: -1px; }
.segments .on { background: #2d4a57; border-color: #2d4a57; color: #fff; font-weight: 700; }
.pick { position: relative; height: 28px; }
.sort { width: 111px; margin-left: 8px; }
.count { width: 53px; margin-left: 7px; }
.pick select { appearance: none; width: 100%; height: 28px; padding: 0 0 0 5px; border: 1px solid #ccc; border-radius: 0; background: #fff; }
.arrow { position: absolute; right: 1px; top: 1px; bottom: 1px; width: 32px; border-left: 1px solid #ccc; background: #eee; pointer-events: none; display: grid; place-items: center; }
.arrow::before { content: ""; width: 6px; height: 6px; border: solid #555; border-width: 0 1px 1px 0; transform: rotate(45deg); margin-bottom: 3px; }

/* Table */
table { width: 100%; table-layout: fixed; border-collapse: collapse; }
.c-check { width: 46px; }
.c-act { width: 100px; }
.c-title { width: 25%; }
.c-tag { width: 97px; }
.c-url { width: 132px; }
.c-img { width: 86px; }
th, td { border: 1px solid #ddd; white-space: nowrap; }
th { height: 30px; padding: 0 2px; font-size: 12px; font-weight: 700; background: linear-gradient(#f0f0f0, #fafafa); }
th.l { text-align: left; }
.sorter { width: 10px; height: 14px; margin-left: 8px; vertical-align: -3px; color: #bbb; }
td { height: 33px; padding: 0 5px; text-align: center; font-size: 13px; }
td:nth-child(3), td:nth-child(4) { text-align: left; }
tbody tr:nth-child(odd) { background: #f9f9f9; }
tbody tr.hover { background: #ecf3f6; }
td a { color: #337ab7; }
th input, td input { appearance: none; display: block; width: 16px; height: 16px; border: 1px solid #bbb; background: #fff; }
th input { background: #f4f4f4; }
td input { margin: 0 0 2px 5px; }
td input:disabled { background: #eee; border-color: #c6c6c6; }
.act { width: 89px; height: 28px; padding: 0; display: flex; align-items: center; justify-content: center; gap: 2px; border: 1px solid #2a6696; border-radius: 2px; background: #2c77ac; color: #fff; font-size: 12px; font-weight: 700; }
.act.green { background: #049136; border-color: #048231; }

/* Footer */
.footer { flex: none; height: 34px; display: flex; align-items: center; padding: 2px 16px 0 7px; background: #222d32; color: #fff; font-weight: 700; white-space: nowrap; }
.licensed { margin-left: 3px; }
.free { display: flex; align-items: center; gap: 3px; margin: 0 9px 0 7px; color: #3f8a49; font-weight: 400; }
.footer a { color: #d5e4eb; }
.bar { margin: 0 2px; color: #3f8a49; font-weight: 400; }
.footer .rate { display: flex; align-items: center; margin-left: auto; color: #f39a2e; font-weight: 400; }
.version { margin-left: 13px; }

/* Page scrollbar */
.scrollbar { flex: none; width: 17px; padding: 3px 4px 0 4px; background: #fafafa; border-right: 1px solid #c4c4c4; }
.thumb { height: 446px; width: 8px; border-radius: 4px; background: #c1c1c1; }
```
